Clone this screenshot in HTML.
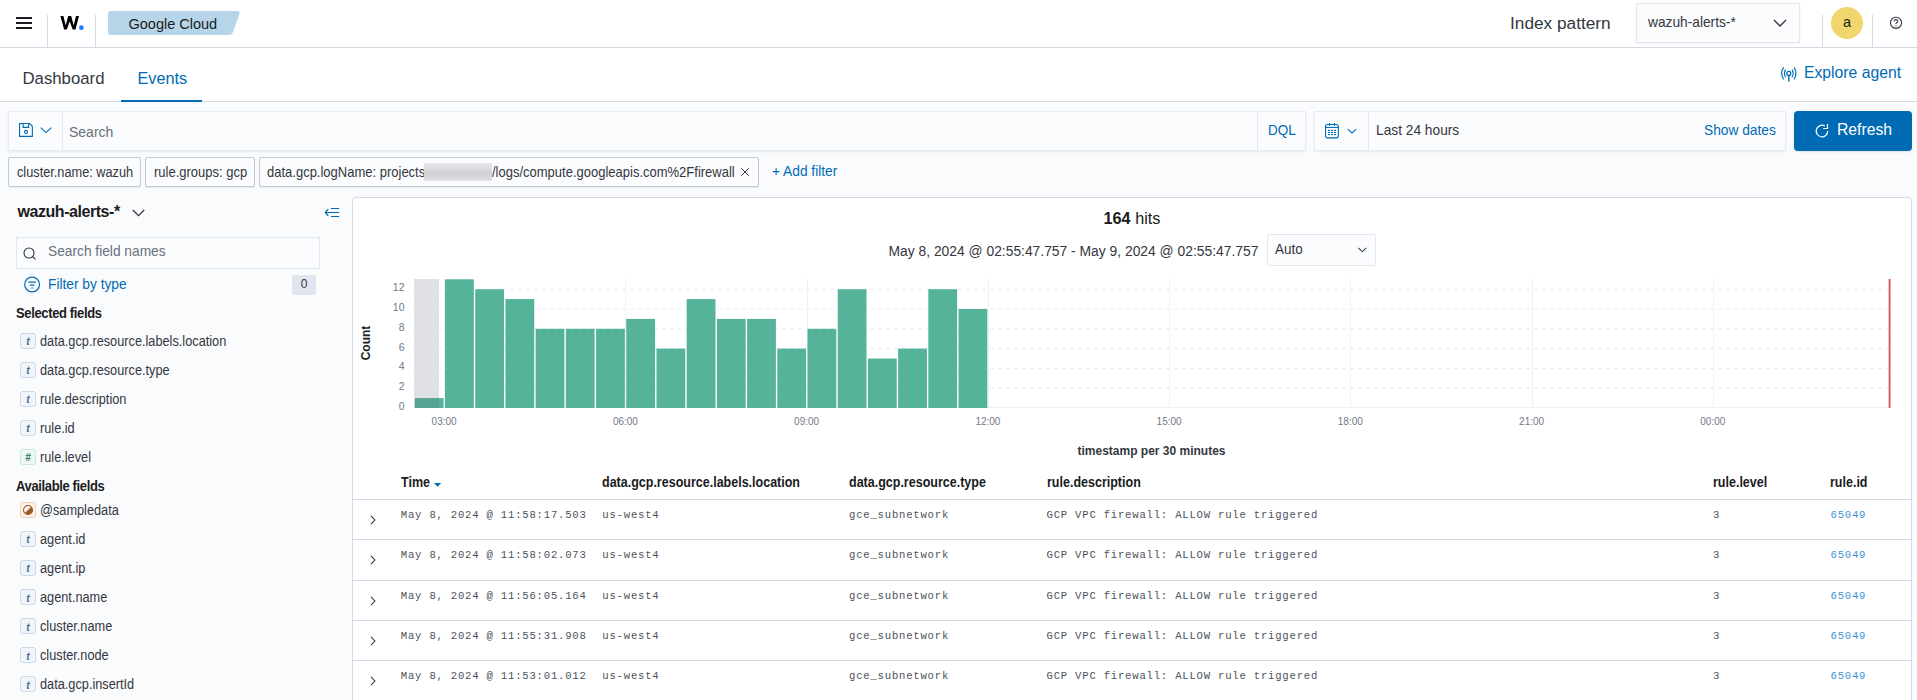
<!DOCTYPE html>
<html><head><meta charset="utf-8"><style>
*{box-sizing:border-box;margin:0;padding:0}
html,body{width:1917px;height:700px;overflow:hidden;background:#fafbfd;font-family:"Liberation Sans",sans-serif;color:#343741}
.a{position:absolute;white-space:nowrap}
.t{position:absolute;white-space:nowrap;line-height:1}
.m{font-family:"Liberation Mono",monospace}
svg{position:absolute;overflow:visible}
</style></head><body>
<div class="a" style="left:0px;top:0px;width:1917px;height:48px;background:#fff;border-bottom:1px solid #d3dae6"></div>
<div class="a" style="left:16px;top:17px;width:16px;height:2px;background:#1a1c21"></div>
<div class="a" style="left:16px;top:22px;width:16px;height:2px;background:#1a1c21"></div>
<div class="a" style="left:16px;top:27px;width:16px;height:2px;background:#1a1c21"></div>
<div class="a" style="left:47px;top:15px;width:1px;height:32px;background:#d3dae6"></div>
<div class="a" style="left:95px;top:15px;width:1px;height:32px;background:#d3dae6"></div>
<svg style="left:60px;top:16px" width="24" height="15" viewBox="0 0 24 15"><polygon points="0.40,-0.10 3.40,-0.10 5.70,9.30 8.20,-0.10 11.20,-0.10 13.70,9.30 16.00,-0.10 19.00,-0.10 15.50,13.60 12.70,13.60 9.70,5.50 6.80,13.60 4.10,13.60" fill="#000"/><circle cx="21.4" cy="11.7" r="2.35" fill="#1e7bff"/></svg>
<svg style="left:108px;top:11px" width="133" height="24" viewBox="0 0 133 24"><path d="M3,0 H129 Q132.5,0 131.5,3 L125,21 Q124,24 121,24 H3 Q0,24 0,21 V3 Q0,0 3,0 Z" fill="#b6d5e9"/></svg>
<div class="t" style="left:128.5px;top:17px;font-size:14.5px;color:#1a1c21;">Google Cloud</div>
<div class="t" style="left:1510px;top:15px;font-size:17.25px;color:#343741;">Index pattern</div>
<div class="a" style="left:1636px;top:3px;width:164px;height:40px;background:#fbfcfd;border:1px solid #e3e8f0;box-shadow:0 1px 2px rgba(0,0,0,.06)"></div>
<div class="t" style="left:1647.5px;top:14px;font-size:15.125px;color:#343741;transform:scaleX(0.9091);transform-origin:0 0;">wazuh-alerts-*</div>
<svg style="left:1773px;top:19px" width="14" height="8" viewBox="0 0 14 8"><polyline points="1,1 7,7 13,1" fill="none" stroke="#343741" stroke-width="1.4"/></svg>
<div class="a" style="left:1822px;top:15px;width:1px;height:32px;background:#d3dae6"></div>
<div class="a" style="left:1831px;top:7px;width:32px;height:32px;border-radius:50%;background:#f0d66c"></div>
<div class="t" style="left:1831px;top:15px;font-size:14.5px;color:#1a1c21;width:32px;text-align:center">a</div>
<div class="a" style="left:1872px;top:15px;width:1px;height:32px;background:#d3dae6"></div>
<svg style="left:1889px;top:16px" width="14" height="14" viewBox="0 0 14 14"><circle cx="7" cy="6.8" r="5.6" fill="none" stroke="#343741" stroke-width="1.1"/><path d="M5.2,5.3 Q5.2,3.6 7,3.6 Q8.8,3.6 8.8,5.2 Q8.8,6.3 7.6,6.8 Q7,7.1 7,8" fill="none" stroke="#343741" stroke-width="1.1"/><circle cx="7" cy="9.9" r=".7" fill="#343741"/></svg>
<div class="a" style="left:0px;top:48px;width:1917px;height:54px;background:#fff;border-bottom:1px solid #d3dae6"></div>
<div class="t" style="left:22.5px;top:71px;font-size:16.75px;color:#343741;">Dashboard</div>
<div class="t" style="left:137.5px;top:70px;font-size:16.25px;color:#006bb4;">Events</div>
<div class="a" style="left:121px;top:100px;width:81px;height:2px;background:#006bb4"></div>
<svg style="left:1776px;top:60px" width="28" height="28" viewBox="0 0 28 28"><g fill="none" stroke="#006bb4" stroke-width="1.2"><path d="M7.6,7.4 Q3.6,13.4 7.6,19.4"/><path d="M9.6,9.6 Q7.2,13.4 9.6,17.2"/><path d="M18,7.4 Q22,13.4 18,19.4"/><path d="M16,9.6 Q18.4,13.4 16,17.2"/><circle cx="12.8" cy="13.4" r="2"/></g><path d="M12.8,15.4 V21.6" stroke="#006bb4" stroke-width="1.4"/></svg>
<div class="t" style="left:1804.2px;top:64px;font-size:17.325px;color:#006bb4;transform:scaleX(0.9091);transform-origin:0 0;">Explore agent</div>
<div class="a" style="left:8px;top:111px;width:1298px;height:40px;background:#fbfcfd;border:1px solid #e6eaf2;box-shadow:0 1px 2px rgba(0,0,0,.07)"></div>
<div class="a" style="left:62px;top:112px;width:1px;height:38px;background:#e3e8f0"></div>
<div class="a" style="left:1257px;top:112px;width:1px;height:38px;background:#e3e8f0"></div>
<svg style="left:19px;top:123px" width="34" height="15" viewBox="0 0 34 15"><g fill="none" stroke="#006bb4" stroke-width="1.1"><path d="M0.55,0.55 H10.6 L13.35,3.3 V13.4 H0.55 Z"/><path d="M4.1,0.55 V4.4 H9.6 V0.55"/><circle cx="7" cy="8.9" r="1.5"/><polyline points="21.6,4.6 27,9.6 32.4,4.6"/></g></svg>
<div class="t" style="left:69.3px;top:124px;font-size:15.4px;color:#69707d;transform:scaleX(0.9091);transform-origin:0 0;">Search</div>
<div class="t" style="left:1268.2px;top:123px;font-size:14.85px;color:#006bb4;transform:scaleX(0.9091);transform-origin:0 0;">DQL</div>
<div class="a" style="left:1314px;top:111px;width:472px;height:40px;background:#fbfcfd;border:1px solid #e6eaf2;box-shadow:0 1px 2px rgba(0,0,0,.07)"></div>
<div class="a" style="left:1368px;top:112px;width:1px;height:38px;background:#e3e8f0"></div>
<svg style="left:1325px;top:123px" width="32" height="15" viewBox="0 0 32 15"><g fill="none" stroke="#006bb4" stroke-width="1.1"><rect x="0.55" y="1.55" width="12.8" height="13.3" rx="2"/><path d="M0.55,4.4 H13.35"/><path d="M4.5,0 V2.8 M9.5,0 V2.8"/><polyline points="22.8,6.2 27,9.9 31.2,6.2"/></g><g fill="#006bb4"><rect x="3" y="6.8" width="2" height="1.1"/><rect x="6" y="6.8" width="2" height="1.1"/><rect x="9" y="6.8" width="2" height="1.1"/><rect x="3" y="8.9" width="2" height="1.1"/><rect x="6" y="8.9" width="2" height="1.1"/><rect x="9" y="8.9" width="2" height="1.1"/><rect x="3" y="11" width="2" height="1.1"/><rect x="6" y="11" width="2" height="1.1"/><rect x="9" y="11" width="2" height="1.1"/></g></svg>
<div class="t" style="left:1376.4px;top:122px;font-size:15.125px;color:#343741;transform:scaleX(0.9091);transform-origin:0 0;">Last 24 hours</div>
<div class="t" style="left:1704.2px;top:122px;font-size:15.125px;color:#006bb4;transform:scaleX(0.9091);transform-origin:0 0;">Show dates</div>
<div class="a" style="left:1794px;top:111px;width:118px;height:40px;background:#006bb4;border-radius:4px;box-shadow:0 1px 2px rgba(0,0,0,.1)"></div>
<svg style="left:1810px;top:118px" width="24" height="24" viewBox="0 0 24 24"><path d="M17.8,13 A5.8,5.8 0 1 1 14.9,8" fill="none" stroke="#fff" stroke-width="1.2"/><path d="M17.5,6 V10.5 H13.2" fill="none" stroke="#fff" stroke-width="1.2"/></svg>
<div class="t" style="left:1837.3px;top:121px;font-size:17.325px;color:#fff;transform:scaleX(0.9091);transform-origin:0 0;">Refresh</div>
<div class="a" style="left:8px;top:157px;width:133px;height:30px;background:#fbfcfd;border:1px solid #c3cad6;border-radius:2px;box-shadow:0 1px 1px rgba(0,0,0,.06)"></div>
<div class="t" style="left:16.5px;top:165px;font-size:14.025px;color:#343741;transform:scaleX(0.9091);transform-origin:0 0;">cluster.name: wazuh</div>
<div class="a" style="left:145px;top:157px;width:110px;height:30px;background:#fbfcfd;border:1px solid #c3cad6;border-radius:2px;box-shadow:0 1px 1px rgba(0,0,0,.06)"></div>
<div class="t" style="left:153.5px;top:165px;font-size:14.3px;color:#343741;transform:scaleX(0.9091);transform-origin:0 0;">rule.groups: gcp</div>
<div class="a" style="left:259px;top:157px;width:500px;height:30px;background:#fbfcfd;border:1px solid #c3cad6;border-radius:2px;box-shadow:0 1px 1px rgba(0,0,0,.06)"></div>
<div class="t" style="left:266.5px;top:165px;font-size:14.3px;color:#343741;transform:scaleX(0.9091);transform-origin:0 0;">data.gcp.logName: projects</div>
<div class="a" style="left:424px;top:163px;width:68px;height:18px;background:linear-gradient(#e7e8eb 0%,#dcdde0 30%,#cfd0d3 55%,#d6d7da 75%,#e2e3e6 100%)"></div>
<div class="t" style="left:491.5px;top:165px;font-size:14.3px;color:#343741;transform:scaleX(0.9091);transform-origin:0 0;">/logs/compute.googleapis.com%2Ffirewall</div>
<svg style="left:740px;top:167px" width="10" height="10" viewBox="0 0 10 10"><path d="M1.2,1.2 L8.8,8.8 M8.8,1.2 L1.2,8.8" stroke="#343741" stroke-width="1"/></svg>
<div class="t" style="left:772px;top:163px;font-size:15.125px;color:#006bb4;transform:scaleX(0.9091);transform-origin:0 0;">+ Add filter</div>
<div class="t" style="left:17.5px;top:204px;font-size:16.0px;color:#1a1c21;font-weight:bold;letter-spacing:-0.45px">wazuh-alerts-*</div>
<svg style="left:132px;top:209px" width="13" height="8" viewBox="0 0 13 8"><polyline points="0.8,1 6.5,6.7 12.2,1" fill="none" stroke="#343741" stroke-width="1.3"/></svg>
<svg style="left:318px;top:200px" width="28" height="24" viewBox="0 0 28 24"><g fill="none" stroke="#006bb4" stroke-width="1.2" stroke-linecap="round"><path d="M13.4,8.5 H20.7 M7.6,12.5 H20.7 M13.4,16.5 H20.7"/><path d="M10,9.4 L7.4,12.5 L10,15.6" stroke-linejoin="round"/></g></svg>
<div class="a" style="left:16px;top:237px;width:304px;height:32px;background:#fbfcfd;border:1px solid #e3e8f0"></div>
<svg style="left:23px;top:247px" width="14" height="13" viewBox="0 0 14 13"><circle cx="6" cy="6" r="5" fill="none" stroke="#343741" stroke-width="1.1"/><path d="M9.5,9.5 L12.6,12.4" stroke="#343741" stroke-width="1.1"/></svg>
<div class="t" style="left:47.6px;top:243px;font-size:15.125px;color:#69707d;transform:scaleX(0.9091);transform-origin:0 0;">Search field names</div>
<svg style="left:24px;top:276px" width="17" height="17" viewBox="0 0 17 17"><g fill="none" stroke="#006bb4" stroke-width="1.2"><circle cx="8.1" cy="8.5" r="7.4"/><path d="M4.3,6.2 H11.9 M5.7,9.2 H10.5 M7.2,12 H9"/></g></svg>
<div class="t" style="left:47.5px;top:276px;font-size:15.125px;color:#006bb4;transform:scaleX(0.9091);transform-origin:0 0;">Filter by type</div>
<div class="a" style="left:292px;top:275px;width:24px;height:20px;background:#e0e5ee;border-radius:3px"></div>
<div class="t" style="left:292px;top:278px;font-size:12.0px;color:#343741;width:24px;text-align:center">0</div>
<div class="t" style="left:16px;top:306px;font-size:14.56px;color:#1a1c21;font-weight:bold;transform:scaleX(0.8929);transform-origin:0 0;letter-spacing:-0.4px">Selected fields</div>
<div class="t" style="left:16px;top:479px;font-size:14.56px;color:#1a1c21;font-weight:bold;transform:scaleX(0.8929);transform-origin:0 0;letter-spacing:-0.4px">Available fields</div>
<div class="a" style="left:20px;top:333px;width:16px;height:16px;background:#f1f5fa;border:1px solid #cadaea;border-radius:3px"><span style="position:absolute;left:0;top:1.3px;width:14px;text-align:center;line-height:1;font:bold italic 10.5px 'Liberation Sans',sans-serif;color:#4a6d95">t</span></div>
<div class="t" style="left:40.3px;top:334px;font-size:14.025px;color:#343741;transform:scaleX(0.9091);transform-origin:0 0;">data.gcp.resource.labels.location</div>
<div class="a" style="left:20px;top:362px;width:16px;height:16px;background:#f1f5fa;border:1px solid #cadaea;border-radius:3px"><span style="position:absolute;left:0;top:1.3px;width:14px;text-align:center;line-height:1;font:bold italic 10.5px 'Liberation Sans',sans-serif;color:#4a6d95">t</span></div>
<div class="t" style="left:40.3px;top:363px;font-size:14.025px;color:#343741;transform:scaleX(0.9091);transform-origin:0 0;">data.gcp.resource.type</div>
<div class="a" style="left:20px;top:391px;width:16px;height:16px;background:#f1f5fa;border:1px solid #cadaea;border-radius:3px"><span style="position:absolute;left:0;top:1.3px;width:14px;text-align:center;line-height:1;font:bold italic 10.5px 'Liberation Sans',sans-serif;color:#4a6d95">t</span></div>
<div class="t" style="left:40.3px;top:392px;font-size:14.025px;color:#343741;transform:scaleX(0.9091);transform-origin:0 0;">rule.description</div>
<div class="a" style="left:20px;top:420px;width:16px;height:16px;background:#f1f5fa;border:1px solid #cadaea;border-radius:3px"><span style="position:absolute;left:0;top:1.3px;width:14px;text-align:center;line-height:1;font:bold italic 10.5px 'Liberation Sans',sans-serif;color:#4a6d95">t</span></div>
<div class="t" style="left:40.3px;top:421px;font-size:14.025px;color:#343741;transform:scaleX(0.9091);transform-origin:0 0;">rule.id</div>
<div class="a" style="left:20px;top:449px;width:16px;height:16px;background:#eef8f4;border:1px solid #c8e8dc;border-radius:3px"><span style="position:absolute;left:0;top:1.6px;width:14px;text-align:center;line-height:1;font:bold italic 10px 'Liberation Sans',sans-serif;color:#3b7a66">#</span></div>
<div class="t" style="left:40.3px;top:450px;font-size:14.025px;color:#343741;transform:scaleX(0.9091);transform-origin:0 0;">rule.level</div>
<div class="a" style="left:20px;top:502.0px;width:16px;height:16px;background:#fbf1ea;border:1px solid #f2d3b6;border-radius:3px"><svg style="left:1px;top:1px" width="12" height="12" viewBox="0 0 12 12"><circle cx="6" cy="6" r="4.5" fill="#faf0e9" stroke="#9b5b22" stroke-width="1.1"/><path d="M9.2,2.8 L2.8,9.2 A4.5,4.5 0 0 0 9.2,2.8Z" fill="#9b5b22"/></svg></div>
<div class="t" style="left:40.3px;top:503px;font-size:14.025px;color:#343741;transform:scaleX(0.9091);transform-origin:0 0;">@sampledata</div>
<div class="a" style="left:20px;top:531.08px;width:16px;height:16px;background:#f1f5fa;border:1px solid #cadaea;border-radius:3px"><span style="position:absolute;left:0;top:1.3px;width:14px;text-align:center;line-height:1;font:bold italic 10.5px 'Liberation Sans',sans-serif;color:#4a6d95">t</span></div>
<div class="t" style="left:40.3px;top:532px;font-size:14.025px;color:#343741;transform:scaleX(0.9091);transform-origin:0 0;">agent.id</div>
<div class="a" style="left:20px;top:560.16px;width:16px;height:16px;background:#f1f5fa;border:1px solid #cadaea;border-radius:3px"><span style="position:absolute;left:0;top:1.3px;width:14px;text-align:center;line-height:1;font:bold italic 10.5px 'Liberation Sans',sans-serif;color:#4a6d95">t</span></div>
<div class="t" style="left:40.3px;top:561px;font-size:14.025px;color:#343741;transform:scaleX(0.9091);transform-origin:0 0;">agent.ip</div>
<div class="a" style="left:20px;top:589.24px;width:16px;height:16px;background:#f1f5fa;border:1px solid #cadaea;border-radius:3px"><span style="position:absolute;left:0;top:1.3px;width:14px;text-align:center;line-height:1;font:bold italic 10.5px 'Liberation Sans',sans-serif;color:#4a6d95">t</span></div>
<div class="t" style="left:40.3px;top:590px;font-size:14.025px;color:#343741;transform:scaleX(0.9091);transform-origin:0 0;">agent.name</div>
<div class="a" style="left:20px;top:618.32px;width:16px;height:16px;background:#f1f5fa;border:1px solid #cadaea;border-radius:3px"><span style="position:absolute;left:0;top:1.3px;width:14px;text-align:center;line-height:1;font:bold italic 10.5px 'Liberation Sans',sans-serif;color:#4a6d95">t</span></div>
<div class="t" style="left:40.3px;top:619px;font-size:14.025px;color:#343741;transform:scaleX(0.9091);transform-origin:0 0;">cluster.name</div>
<div class="a" style="left:20px;top:647.4px;width:16px;height:16px;background:#f1f5fa;border:1px solid #cadaea;border-radius:3px"><span style="position:absolute;left:0;top:1.3px;width:14px;text-align:center;line-height:1;font:bold italic 10.5px 'Liberation Sans',sans-serif;color:#4a6d95">t</span></div>
<div class="t" style="left:40.3px;top:648px;font-size:14.025px;color:#343741;transform:scaleX(0.9091);transform-origin:0 0;">cluster.node</div>
<div class="a" style="left:20px;top:676.48px;width:16px;height:16px;background:#f1f5fa;border:1px solid #cadaea;border-radius:3px"><span style="position:absolute;left:0;top:1.3px;width:14px;text-align:center;line-height:1;font:bold italic 10.5px 'Liberation Sans',sans-serif;color:#4a6d95">t</span></div>
<div class="t" style="left:40.3px;top:677px;font-size:14.025px;color:#343741;transform:scaleX(0.9091);transform-origin:0 0;">data.gcp.insertId</div>
<div class="a" style="left:352px;top:197px;width:1560px;height:520px;background:#fff;border:1px solid #d3dae6;border-radius:4px"></div>
<div class="t" style="left:1103.5px;top:210px;font-size:16.25px;color:#1a1c21;"><b>164</b> hits</div>
<div class="t" style="left:888.5px;top:245px;font-size:13.85px;color:#343741;">May 8, 2024 @ 02:55:47.757 - May 9, 2024 @ 02:55:47.757</div>
<div class="a" style="left:1267px;top:234px;width:109px;height:32px;background:#fbfcfd;border:1px solid #e3e8f0;border-radius:2px"></div>
<div class="t" style="left:1275px;top:241px;font-size:15.525px;color:#343741;transform:scaleX(0.8696);transform-origin:0 0;">Auto</div>
<svg style="left:1357px;top:246px" width="11" height="8" viewBox="0 0 11 8"><polyline points="1.3,1.8 5.3,5.6 9.3,1.8" fill="none" stroke="#343741" stroke-width="1.05"/></svg>
<svg style="left:0;top:0" width="1917" height="700"><line x1="414" y1="388.2" x2="1889" y2="388.2" stroke="#e9ebf0" stroke-width="1" stroke-dasharray="4,4"/><line x1="414" y1="368.4" x2="1889" y2="368.4" stroke="#e9ebf0" stroke-width="1" stroke-dasharray="4,4"/><line x1="414" y1="348.6" x2="1889" y2="348.6" stroke="#e9ebf0" stroke-width="1" stroke-dasharray="4,4"/><line x1="414" y1="328.8" x2="1889" y2="328.8" stroke="#e9ebf0" stroke-width="1" stroke-dasharray="4,4"/><line x1="414" y1="309.0" x2="1889" y2="309.0" stroke="#e9ebf0" stroke-width="1" stroke-dasharray="4,4"/><line x1="414" y1="289.2" x2="1889" y2="289.2" stroke="#e9ebf0" stroke-width="1" stroke-dasharray="4,4"/><line x1="444.5" y1="279" x2="444.5" y2="408" stroke="#eef0f3" stroke-width="1"/><text x="444.1" y="424.5" text-anchor="middle" font-size="10" fill="#737985" font-family="Liberation Sans">03:00</text><line x1="625.5" y1="279" x2="625.5" y2="408" stroke="#eef0f3" stroke-width="1"/><text x="625.4" y="424.5" text-anchor="middle" font-size="10" fill="#737985" font-family="Liberation Sans">06:00</text><line x1="807.5" y1="279" x2="807.5" y2="408" stroke="#eef0f3" stroke-width="1"/><text x="806.6" y="424.5" text-anchor="middle" font-size="10" fill="#737985" font-family="Liberation Sans">09:00</text><line x1="988.5" y1="279" x2="988.5" y2="408" stroke="#eef0f3" stroke-width="1"/><text x="987.9" y="424.5" text-anchor="middle" font-size="10" fill="#737985" font-family="Liberation Sans">12:00</text><line x1="1169.5" y1="279" x2="1169.5" y2="408" stroke="#eef0f3" stroke-width="1"/><text x="1169.1" y="424.5" text-anchor="middle" font-size="10" fill="#737985" font-family="Liberation Sans">15:00</text><line x1="1350.5" y1="279" x2="1350.5" y2="408" stroke="#eef0f3" stroke-width="1"/><text x="1350.3" y="424.5" text-anchor="middle" font-size="10" fill="#737985" font-family="Liberation Sans">18:00</text><line x1="1532.5" y1="279" x2="1532.5" y2="408" stroke="#eef0f3" stroke-width="1"/><text x="1531.6" y="424.5" text-anchor="middle" font-size="10" fill="#737985" font-family="Liberation Sans">21:00</text><line x1="1713.5" y1="279" x2="1713.5" y2="408" stroke="#eef0f3" stroke-width="1"/><text x="1712.8" y="424.5" text-anchor="middle" font-size="10" fill="#737985" font-family="Liberation Sans">00:00</text><line x1="414" y1="407.5" x2="1889" y2="407.5" stroke="#eef0f3" stroke-width="1"/><rect x="414.80" y="398.10" width="28.8" height="9.90" fill="#54b399"/><rect x="445.01" y="279.30" width="28.8" height="128.70" fill="#54b399"/><rect x="475.22" y="289.20" width="28.8" height="118.80" fill="#54b399"/><rect x="505.42" y="299.10" width="28.8" height="108.90" fill="#54b399"/><rect x="535.63" y="328.80" width="28.8" height="79.20" fill="#54b399"/><rect x="565.84" y="328.80" width="28.8" height="79.20" fill="#54b399"/><rect x="596.05" y="328.80" width="28.8" height="79.20" fill="#54b399"/><rect x="626.26" y="318.90" width="28.8" height="89.10" fill="#54b399"/><rect x="656.46" y="348.60" width="28.8" height="59.40" fill="#54b399"/><rect x="686.67" y="299.10" width="28.8" height="108.90" fill="#54b399"/><rect x="716.88" y="318.90" width="28.8" height="89.10" fill="#54b399"/><rect x="747.09" y="318.90" width="28.8" height="89.10" fill="#54b399"/><rect x="777.30" y="348.60" width="28.8" height="59.40" fill="#54b399"/><rect x="807.50" y="328.80" width="28.8" height="79.20" fill="#54b399"/><rect x="837.71" y="289.20" width="28.8" height="118.80" fill="#54b399"/><rect x="867.92" y="358.50" width="28.8" height="49.50" fill="#54b399"/><rect x="898.13" y="348.60" width="28.8" height="59.40" fill="#54b399"/><rect x="928.34" y="289.20" width="28.8" height="118.80" fill="#54b399"/><rect x="958.54" y="309.00" width="28.8" height="99.00" fill="#54b399"/><rect x="414" y="279" width="25" height="129" fill="rgb(100,105,130)" fill-opacity="0.2"/><line x1="414" y1="388.2" x2="439" y2="388.2" stroke="#e9eaee" stroke-width="1" stroke-dasharray="4,4"/><line x1="414" y1="368.4" x2="439" y2="368.4" stroke="#e9eaee" stroke-width="1" stroke-dasharray="4,4"/><line x1="414" y1="348.6" x2="439" y2="348.6" stroke="#e9eaee" stroke-width="1" stroke-dasharray="4,4"/><line x1="414" y1="328.8" x2="439" y2="328.8" stroke="#e9eaee" stroke-width="1" stroke-dasharray="4,4"/><line x1="414" y1="309.0" x2="439" y2="309.0" stroke="#e9eaee" stroke-width="1" stroke-dasharray="4,4"/><line x1="414" y1="289.2" x2="439" y2="289.2" stroke="#e9eaee" stroke-width="1" stroke-dasharray="4,4"/><text x="404.5" y="410.0" text-anchor="end" font-size="10.5" fill="#737985" font-family="Liberation Sans">0</text><text x="404.5" y="390.2" text-anchor="end" font-size="10.5" fill="#737985" font-family="Liberation Sans">2</text><text x="404.5" y="370.4" text-anchor="end" font-size="10.5" fill="#737985" font-family="Liberation Sans">4</text><text x="404.5" y="350.6" text-anchor="end" font-size="10.5" fill="#737985" font-family="Liberation Sans">6</text><text x="404.5" y="330.8" text-anchor="end" font-size="10.5" fill="#737985" font-family="Liberation Sans">8</text><text x="404.5" y="311.0" text-anchor="end" font-size="10.5" fill="#737985" font-family="Liberation Sans">10</text><text x="404.5" y="291.2" text-anchor="end" font-size="10.5" fill="#737985" font-family="Liberation Sans">12</text><rect x="1888.6" y="279" width="2" height="129" fill="#d4635e"/><text transform="translate(370,343) rotate(-90)" text-anchor="middle" font-size="12" font-weight="bold" fill="#1a1c21" font-family="Liberation Sans">Count</text><text x="1151.5" y="455" text-anchor="middle" font-size="12" font-weight="bold" fill="#343741" font-family="Liberation Sans">timestamp per 30 minutes</text></svg>
<div class="t" style="left:401px;top:475px;font-size:14.0px;color:#1a1c21;font-weight:bold;transform:scaleX(0.8929);transform-origin:0 0;">Time</div>
<div class="t" style="left:602.3px;top:475px;font-size:14.0px;color:#1a1c21;font-weight:bold;transform:scaleX(0.8929);transform-origin:0 0;">data.gcp.resource.labels.location</div>
<div class="t" style="left:849px;top:475px;font-size:14.0px;color:#1a1c21;font-weight:bold;transform:scaleX(0.8929);transform-origin:0 0;">data.gcp.resource.type</div>
<div class="t" style="left:1046.5px;top:475px;font-size:14.0px;color:#1a1c21;font-weight:bold;transform:scaleX(0.8929);transform-origin:0 0;">rule.description</div>
<div class="t" style="left:1713px;top:475px;font-size:14.0px;color:#1a1c21;font-weight:bold;transform:scaleX(0.8929);transform-origin:0 0;">rule.level</div>
<div class="t" style="left:1830px;top:475px;font-size:14.0px;color:#1a1c21;font-weight:bold;transform:scaleX(0.8929);transform-origin:0 0;">rule.id</div>
<svg style="left:434px;top:483px" width="8" height="5" viewBox="0 0 8 5"><path d="M0,0 H7.2 L3.6,3.8Z" fill="#006bb4"/></svg>
<div class="a" style="left:353px;top:499px;width:1558px;height:1px;background:#d3dae6"></div>
<div class="a" style="left:353px;top:539px;width:1558px;height:1px;background:#d3dae6"></div>
<div class="a" style="left:353px;top:580px;width:1558px;height:1px;background:#d3dae6"></div>
<div class="a" style="left:353px;top:620px;width:1558px;height:1px;background:#d3dae6"></div>
<div class="a" style="left:353px;top:660px;width:1558px;height:1px;background:#d3dae6"></div>
<svg style="left:369.5px;top:515.0px" width="7" height="10" viewBox="0 0 7 10"><polyline points="1,0.8 4.9,5 1,9.2" fill="none" stroke="#343741" stroke-width="1.1"/></svg>
<div class="t" style="left:400.8px;top:510px;font-size:10.6px;color:#4d525c;font-family:'Liberation Mono',monospace;letter-spacing:0.79px">May 8, 2024 @ 11:58:17.503</div>
<div class="t" style="left:602.3px;top:510px;font-size:10.6px;color:#4d525c;font-family:'Liberation Mono',monospace;letter-spacing:0.79px">us-west4</div>
<div class="t" style="left:849px;top:510px;font-size:10.6px;color:#4d525c;font-family:'Liberation Mono',monospace;letter-spacing:0.79px">gce_subnetwork</div>
<div class="t" style="left:1046.5px;top:510px;font-size:10.6px;color:#4d525c;font-family:'Liberation Mono',monospace;letter-spacing:0.79px">GCP VPC firewall: ALLOW rule triggered</div>
<div class="t" style="left:1713px;top:510px;font-size:10.6px;color:#4d525c;font-family:'Liberation Mono',monospace;letter-spacing:0.79px">3</div>
<div class="t" style="left:1830.5px;top:510px;font-size:10.6px;color:#3f95d4;font-family:'Liberation Mono',monospace;letter-spacing:0.79px">65049</div>
<svg style="left:369.5px;top:555.0px" width="7" height="10" viewBox="0 0 7 10"><polyline points="1,0.8 4.9,5 1,9.2" fill="none" stroke="#343741" stroke-width="1.1"/></svg>
<div class="t" style="left:400.8px;top:550px;font-size:10.6px;color:#4d525c;font-family:'Liberation Mono',monospace;letter-spacing:0.79px">May 8, 2024 @ 11:58:02.073</div>
<div class="t" style="left:602.3px;top:550px;font-size:10.6px;color:#4d525c;font-family:'Liberation Mono',monospace;letter-spacing:0.79px">us-west4</div>
<div class="t" style="left:849px;top:550px;font-size:10.6px;color:#4d525c;font-family:'Liberation Mono',monospace;letter-spacing:0.79px">gce_subnetwork</div>
<div class="t" style="left:1046.5px;top:550px;font-size:10.6px;color:#4d525c;font-family:'Liberation Mono',monospace;letter-spacing:0.79px">GCP VPC firewall: ALLOW rule triggered</div>
<div class="t" style="left:1713px;top:550px;font-size:10.6px;color:#4d525c;font-family:'Liberation Mono',monospace;letter-spacing:0.79px">3</div>
<div class="t" style="left:1830.5px;top:550px;font-size:10.6px;color:#3f95d4;font-family:'Liberation Mono',monospace;letter-spacing:0.79px">65049</div>
<svg style="left:369.5px;top:596.0px" width="7" height="10" viewBox="0 0 7 10"><polyline points="1,0.8 4.9,5 1,9.2" fill="none" stroke="#343741" stroke-width="1.1"/></svg>
<div class="t" style="left:400.8px;top:591px;font-size:10.6px;color:#4d525c;font-family:'Liberation Mono',monospace;letter-spacing:0.79px">May 8, 2024 @ 11:56:05.164</div>
<div class="t" style="left:602.3px;top:591px;font-size:10.6px;color:#4d525c;font-family:'Liberation Mono',monospace;letter-spacing:0.79px">us-west4</div>
<div class="t" style="left:849px;top:591px;font-size:10.6px;color:#4d525c;font-family:'Liberation Mono',monospace;letter-spacing:0.79px">gce_subnetwork</div>
<div class="t" style="left:1046.5px;top:591px;font-size:10.6px;color:#4d525c;font-family:'Liberation Mono',monospace;letter-spacing:0.79px">GCP VPC firewall: ALLOW rule triggered</div>
<div class="t" style="left:1713px;top:591px;font-size:10.6px;color:#4d525c;font-family:'Liberation Mono',monospace;letter-spacing:0.79px">3</div>
<div class="t" style="left:1830.5px;top:591px;font-size:10.6px;color:#3f95d4;font-family:'Liberation Mono',monospace;letter-spacing:0.79px">65049</div>
<svg style="left:369.5px;top:636.0px" width="7" height="10" viewBox="0 0 7 10"><polyline points="1,0.8 4.9,5 1,9.2" fill="none" stroke="#343741" stroke-width="1.1"/></svg>
<div class="t" style="left:400.8px;top:631px;font-size:10.6px;color:#4d525c;font-family:'Liberation Mono',monospace;letter-spacing:0.79px">May 8, 2024 @ 11:55:31.908</div>
<div class="t" style="left:602.3px;top:631px;font-size:10.6px;color:#4d525c;font-family:'Liberation Mono',monospace;letter-spacing:0.79px">us-west4</div>
<div class="t" style="left:849px;top:631px;font-size:10.6px;color:#4d525c;font-family:'Liberation Mono',monospace;letter-spacing:0.79px">gce_subnetwork</div>
<div class="t" style="left:1046.5px;top:631px;font-size:10.6px;color:#4d525c;font-family:'Liberation Mono',monospace;letter-spacing:0.79px">GCP VPC firewall: ALLOW rule triggered</div>
<div class="t" style="left:1713px;top:631px;font-size:10.6px;color:#4d525c;font-family:'Liberation Mono',monospace;letter-spacing:0.79px">3</div>
<div class="t" style="left:1830.5px;top:631px;font-size:10.6px;color:#3f95d4;font-family:'Liberation Mono',monospace;letter-spacing:0.79px">65049</div>
<svg style="left:369.5px;top:676.0px" width="7" height="10" viewBox="0 0 7 10"><polyline points="1,0.8 4.9,5 1,9.2" fill="none" stroke="#343741" stroke-width="1.1"/></svg>
<div class="t" style="left:400.8px;top:671px;font-size:10.6px;color:#4d525c;font-family:'Liberation Mono',monospace;letter-spacing:0.79px">May 8, 2024 @ 11:53:01.012</div>
<div class="t" style="left:602.3px;top:671px;font-size:10.6px;color:#4d525c;font-family:'Liberation Mono',monospace;letter-spacing:0.79px">us-west4</div>
<div class="t" style="left:849px;top:671px;font-size:10.6px;color:#4d525c;font-family:'Liberation Mono',monospace;letter-spacing:0.79px">gce_subnetwork</div>
<div class="t" style="left:1046.5px;top:671px;font-size:10.6px;color:#4d525c;font-family:'Liberation Mono',monospace;letter-spacing:0.79px">GCP VPC firewall: ALLOW rule triggered</div>
<div class="t" style="left:1713px;top:671px;font-size:10.6px;color:#4d525c;font-family:'Liberation Mono',monospace;letter-spacing:0.79px">3</div>
<div class="t" style="left:1830.5px;top:671px;font-size:10.6px;color:#3f95d4;font-family:'Liberation Mono',monospace;letter-spacing:0.79px">65049</div>
</body></html>
